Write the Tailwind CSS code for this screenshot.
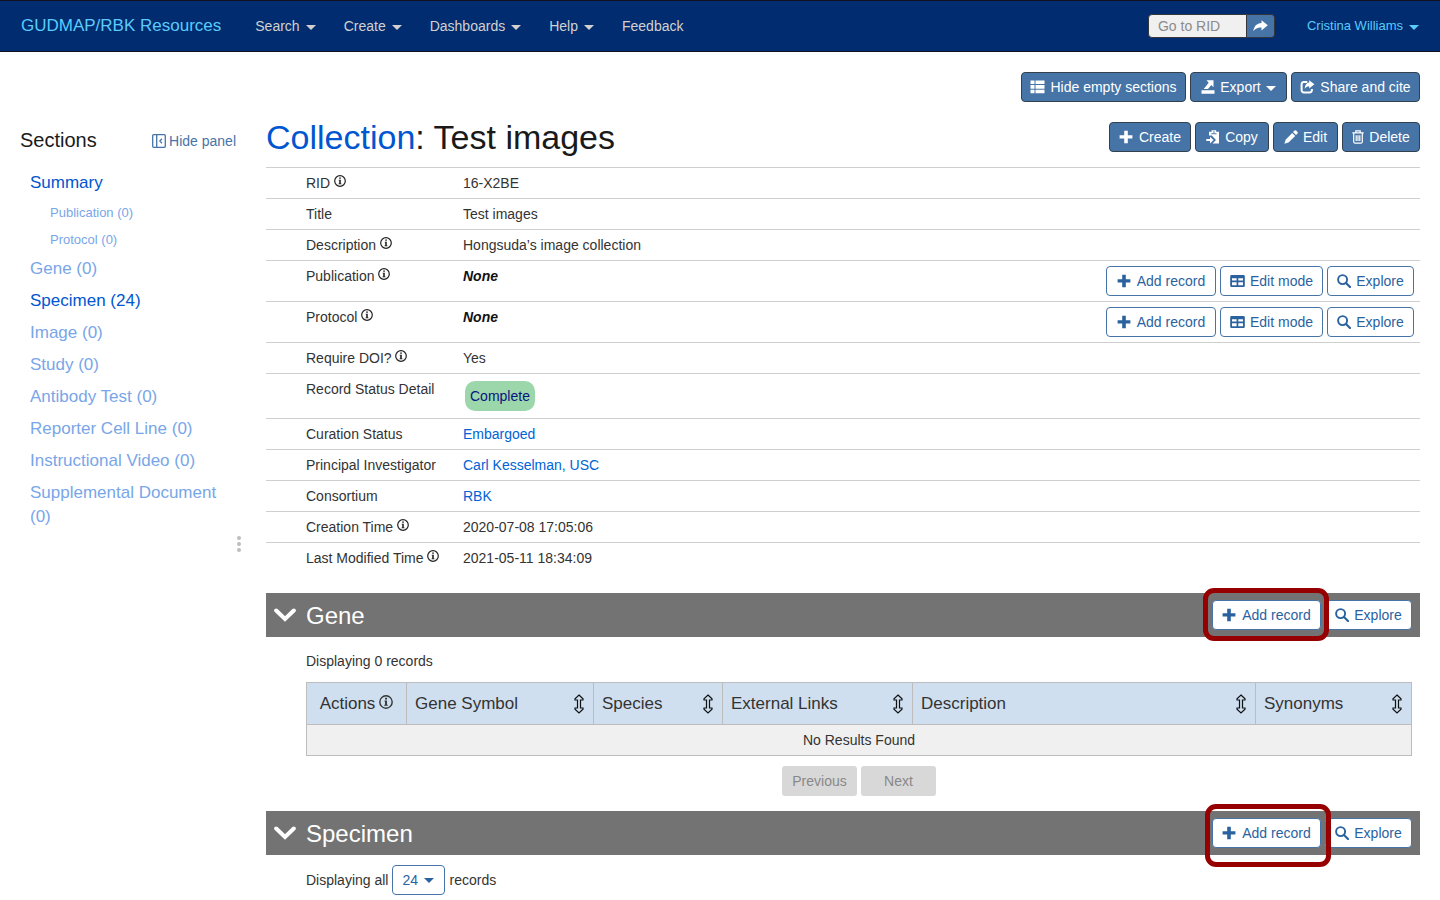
<!DOCTYPE html>
<html lang="en">
<head>
<meta charset="utf-8">
<meta name="viewport" content="width=device-width, initial-scale=1">
<title>Collection: Test images</title>
<script src="https://cdn.jsdelivr.net/npm/@tailwindcss/browser@4"></script>
</head>
<body class="min-h-screen bg-white font-['Liberation_Sans',Arial,sans-serif] text-sm leading-5 text-[#333]">
<svg class="hidden" aria-hidden="true">
  <symbol id="caret" viewBox="0 0 10 5"><path d="M0 0h10L5 5z" fill="currentColor"/></symbol>
  <symbol id="info" viewBox="0 0 12 12"><circle cx="6" cy="6" r="5.3" fill="none" stroke="currentColor" stroke-width="1.2"/><path d="M5.2 2.4h1.7v1.4H5.2zM4.7 4.8h2.1v3.6h.7v.8h-3v-.8h.7V5.6h-.5z" fill="currentColor"/></symbol>
  <symbol id="plus" viewBox="0 0 14 14"><path d="M5.2.8h3.6v4.4h4.6v3.4H8.800v4.600H5.200V8.600H.6V5.200h4.600z" fill="currentColor"/></symbol>
  <symbol id="grid" viewBox="0 0 15 14"><path fill-rule="evenodd" d="M1.500 1h12a1.300 1.300 0 0 1 1.300 1.300v9.400a1.300 1.300 0 0 1-1.300 1.300h-12a1.300 1.300 0 0 1-1.300-1.300V2.300A1.300 1.300 0 0 1 1.500 1zM2 4.300v2.300h4.600V4.300zm6.300 0v2.300H13V4.300zM2 8.300v2.900h4.600V8.300zm6.300 0v2.900H13V8.300z" fill="currentColor"/></symbol>
  <symbol id="search" viewBox="0 0 14 14"><circle cx="5.600" cy="5.600" r="4.500" fill="none" stroke="currentColor" stroke-width="1.900"/><path d="M9 9l4 4" stroke="currentColor" stroke-width="2.200" stroke-linecap="round"/></symbol>
  <symbol id="list" viewBox="0 0 15 14"><path d="M.5.500h4v3.600h-4zM5.500.500h9v3.600h-9zM.5 5.100h4v3.600h-4zM5.500 5.100h9v3.600h-9zM.5 9.700h4v3.600h-4zM5.500 9.700h9v3.600h-9z" fill="currentColor"/></symbol>
  <symbol id="export" viewBox="0 0 14 14"><path d="M.5 10.300h13v3.500H.5zM5.500.2h7v7L10.300 5 7 9H2.700l5-6.300z" fill="currentColor"/></symbol>
  <symbol id="share" viewBox="0 0 15 14"><path d="M7.300 1.900H4A2.200 2.200 0 0 0 1.600 4.100v6A2.200 2.200 0 0 0 4 12.400h5.700a2.200 2.200 0 0 0 2.200-2.300V9" fill="none" stroke="currentColor" stroke-width="2"/><path d="M9.200.3l5.200 4-5.200 4.200V6.200C7 6.200 5.700 7 4.700 8.900 4.800 5.200 6.500 2.900 9.200 2.600z" fill="currentColor"/></symbol>
  <symbol id="copy" viewBox="0 0 14 14"><path d="M3 1.800h2.600V.3h4.600v1.500H13v11.700H6.500L10 10 5.800 5.500H3zM5.300 3.200v1h5.200v-1zM7 1.400v1h1.800v-1z" fill="currentColor" fill-rule="evenodd"/><path d="M4 6.700L7.500 10 4 13.400V11H.3V9H4z" fill="currentColor"/></symbol>
  <symbol id="pencil" viewBox="0 0 14 14"><path d="M10.300.8a1.500 1.500 0 0 1 2.100 0l.9.900a1.500 1.500 0 0 1 0 2.100l-1.300 1.300-3-3zM8.200 2.900l3 3-6.700 6.700-4.100 1.200L1.600 9.700z" fill="currentColor"/></symbol>
  <symbol id="trash" viewBox="0 0 12 14"><path d="M.3 2.800h11.400M3.800 2.800V.8h4.400v2M1.700 3v8.700c0 .9.600 1.500 1.500 1.500h5.600c.9 0 1.500-.6 1.500-1.500V3M4.200 5.200v5.800M6 5.200v5.800M7.800 5.200v5.800" fill="none" stroke="currentColor" stroke-width="1.200"/></symbol>
  <symbol id="go" viewBox="0 0 15 12"><path d="M8.500.2L14.800 5.300 8.500 10.400V7.500C4.800 7.300 2.500 8.300.3 11.300 1 6.200 3.700 3.300 8.500 3z" fill="currentColor"/></symbol>
  <symbol id="chevron" viewBox="0 0 22 14"><path d="M2.200 2.500L11 11l8.800-8.500" fill="none" stroke="currentColor" stroke-width="4" stroke-linecap="round"/></symbol>
  <symbol id="sort" viewBox="0 0 10 20"><path d="M5 1L9 4.800V6H6.500v8H9v1.200L5 19 1 15.200V14h2.500V6H1V4.800z" fill="none" stroke="currentColor" stroke-width="1.200"/></symbol>
  <symbol id="panel" viewBox="0 0 14 14"><path d="M1.700.7h10.600a1 1 0 0 1 1 1v10.600a1 1 0 0 1-1 1H1.700a1 1 0 0 1-1-1V1.700a1 1 0 0 1 1-1zM4.700.7v12.600M9.900 4.800L7.900 7l2 2.200" fill="none" stroke="currentColor" stroke-width="1.300"/></symbol>
</svg>

<header class="flex h-[52px] items-center border-y border-[#10131f] bg-[#012c70] pr-[21px] pl-[21px] text-[#d3d1cf]">
  <a href="#" class="text-[17px] whitespace-nowrap text-[#5bcbfb]">GUDMAP/RBK Resources</a>
  <nav class="ml-[34px] flex items-center gap-[28px]">
    <button class="flex items-center gap-1.5">Search<svg class="mt-0.5 h-[5px] w-2.5"><use href="#caret"/></svg></button>
    <button class="flex items-center gap-1.5">Create<svg class="mt-0.5 h-[5px] w-2.5"><use href="#caret"/></svg></button>
    <button class="flex items-center gap-1.5">Dashboards<svg class="mt-0.5 h-[5px] w-2.5"><use href="#caret"/></svg></button>
    <button class="flex items-center gap-1.5">Help<svg class="mt-0.5 h-[5px] w-2.5"><use href="#caret"/></svg></button>
    <a href="#">Feedback</a>
  </nav>
  <form class="ml-auto flex h-6">
    <input type="text" aria-label="Go to RID" placeholder="Go to RID" class="w-[99px] rounded-l border border-[#33373d] bg-[#f0f0f0] px-[9px] text-sm text-[#333] placeholder:text-[#8b8b8b]">
    <button type="button" aria-label="Go" class="flex w-7 items-center justify-center rounded-r border border-l-0 border-[#33373d] bg-[#4674a7] text-white"><svg class="h-3 w-[15px]"><use href="#go"/></svg></button>
  </form>
  <button class="ml-8 flex items-center gap-1.5 text-[13px] text-[#5bcbfb]">Cristina Williams<svg class="mt-0.5 h-[5px] w-2.5"><use href="#caret"/></svg></button>
</header>

<div class="flex">
  <aside class="w-[246px] shrink-0 pt-[74px]">
    <div class="flex items-center justify-between pr-2.5 pl-5">
      <h2 class="text-xl leading-7 text-[#1a1a1a]">Sections</h2>
      <button class="mt-0.5 flex items-center gap-[3px] text-[#4674a7]"><svg class="size-3.5"><use href="#panel"/></svg>Hide panel</button>
    </div>
    <ul class="mt-[13px] pr-5 pl-[30px] text-[17px] leading-6 text-[#79a6e8]">
      <li class="py-1"><a href="#summary" class="text-[#0056d0]">Summary</a></li>
      <li class="pl-5 text-[13px] leading-[27px]"><a href="#publication">Publication (0)</a></li>
      <li class="pl-5 text-[13px] leading-[27px]"><a href="#protocol">Protocol (0)</a></li>
      <li class="py-1"><a href="#gene">Gene (0)</a></li>
      <li class="py-1"><a href="#specimen" class="text-[#0056d0]">Specimen (24)</a></li>
      <li class="py-1"><a href="#">Image (0)</a></li>
      <li class="py-1"><a href="#">Study (0)</a></li>
      <li class="py-1"><a href="#">Antibody Test (0)</a></li>
      <li class="py-1"><a href="#">Reporter Cell Line (0)</a></li>
      <li class="py-1"><a href="#">Instructional Video (0)</a></li>
      <li class="py-1"><a href="#">Supplemental Document (0)</a></li>
    </ul>
    <div class="mt-[3px] flex flex-col items-end gap-0.5 pr-[5px]">
      <span class="size-1 rounded-full bg-[#bdbdbd]"></span>
      <span class="size-1 rounded-full bg-[#bdbdbd]"></span>
      <span class="size-1 rounded-full bg-[#bdbdbd]"></span>
    </div>
  </aside>

  <main class="min-w-0 flex-1 px-5 pt-5">
    <div class="flex justify-end gap-1 text-white">
      <button class="flex h-[30px] min-w-[165px] items-center justify-center gap-[5px] rounded border border-[#33414f] bg-[#4674a7]"><svg class="h-3.5 w-[15px]"><use href="#list"/></svg>Hide empty sections</button>
      <button class="flex h-[30px] min-w-[97px] items-center justify-center gap-[5px] rounded border border-[#33414f] bg-[#4674a7]"><svg class="size-3.5"><use href="#export"/></svg>Export<svg class="mt-0.5 h-[5px] w-2.5"><use href="#caret"/></svg></button>
      <button class="flex h-[30px] min-w-[129px] items-center justify-center gap-[5px] rounded border border-[#33414f] bg-[#4674a7]"><svg class="h-3.5 w-[15px]"><use href="#share"/></svg>Share and cite</button>
    </div>
    <div class="mt-5 mb-[15px] flex items-center justify-between text-white">
      <h1 class="text-[34px] leading-[30px] text-[#1a1a1a]"><a href="#" class="text-[#0056d0]">Collection</a>: Test images</h1>
      <div class="flex gap-1">
        <button class="flex h-[30px] min-w-[82px] items-center justify-center gap-1.5 rounded border border-[#33414f] bg-[#4674a7]"><svg class="size-3.5"><use href="#plus"/></svg>Create</button>
        <button class="flex h-[30px] min-w-[74px] items-center justify-center gap-[5px] rounded border border-[#33414f] bg-[#4674a7]"><svg class="size-3.5"><use href="#copy"/></svg>Copy</button>
        <button class="flex h-[30px] min-w-[65px] items-center justify-center gap-[5px] rounded border border-[#33414f] bg-[#4674a7]"><svg class="size-3.5"><use href="#pencil"/></svg>Edit</button>
        <button class="flex h-[30px] min-w-[78px] items-center justify-center gap-[5px] rounded border border-[#33414f] bg-[#4674a7]"><svg class="h-3.5 w-3"><use href="#trash"/></svg>Delete</button>
      </div>
    </div>

    <table id="summary" class="w-full border-separate border-spacing-0 [&_td]:border-t [&_td]:border-[#cfcfcf] [&_td]:py-[5px] [&_td]:align-top [&_th]:w-[197px] [&_th]:border-t [&_th]:border-[#cfcfcf] [&_th]:py-[5px] [&_th]:pl-10 [&_th]:text-left [&_th]:align-top [&_th]:font-normal [&_th]:whitespace-nowrap">
      <tbody>
        <tr><th scope="row">RID <svg class="inline-block size-3 align-[1px] text-[#222]"><use href="#info"/></svg></th><td>16-X2BE</td></tr>
        <tr><th scope="row">Title</th><td>Test images</td></tr>
        <tr><th scope="row">Description <svg class="inline-block size-3 align-[1px] text-[#222]"><use href="#info"/></svg></th><td>Hongsuda’s image collection</td></tr>
        <tr id="publication"><th scope="row">Publication <svg class="inline-block size-3 align-[1px] text-[#222]"><use href="#info"/></svg></th><td>
          <div class="flex justify-between pr-1.5"><strong class="text-[#111] italic">None</strong>
            <div class="flex gap-1 text-[#2a629f]">
              <button class="flex h-[30px] min-w-[110px] items-center justify-center gap-1.5 rounded border border-[#4674a7] bg-white"><svg class="size-3.5"><use href="#plus"/></svg>Add record</button>
              <button class="flex h-[30px] min-w-[103px] items-center justify-center gap-[5px] rounded border border-[#4674a7] bg-white"><svg class="h-3.5 w-[15px]"><use href="#grid"/></svg>Edit mode</button>
              <button class="flex h-[30px] min-w-[87px] items-center justify-center gap-[5px] rounded border border-[#4674a7] bg-white"><svg class="size-3.5"><use href="#search"/></svg>Explore</button>
            </div></div></td></tr>
        <tr id="protocol"><th scope="row">Protocol <svg class="inline-block size-3 align-[1px] text-[#222]"><use href="#info"/></svg></th><td>
          <div class="flex justify-between pr-1.5"><strong class="text-[#111] italic">None</strong>
            <div class="flex gap-1 text-[#2a629f]">
              <button class="flex h-[30px] min-w-[110px] items-center justify-center gap-1.5 rounded border border-[#4674a7] bg-white"><svg class="size-3.5"><use href="#plus"/></svg>Add record</button>
              <button class="flex h-[30px] min-w-[103px] items-center justify-center gap-[5px] rounded border border-[#4674a7] bg-white"><svg class="h-3.5 w-[15px]"><use href="#grid"/></svg>Edit mode</button>
              <button class="flex h-[30px] min-w-[87px] items-center justify-center gap-[5px] rounded border border-[#4674a7] bg-white"><svg class="size-3.5"><use href="#search"/></svg>Explore</button>
            </div></div></td></tr>
        <tr><th scope="row">Require DOI? <svg class="inline-block size-3 align-[1px] text-[#222]"><use href="#info"/></svg></th><td>Yes</td></tr>
        <tr><th scope="row">Record Status Detail</th><td><div class="mx-0.5 my-0.5 w-fit rounded-[10px] bg-[#9cd6ab] p-[5px] text-[#0a1380]">Complete</div></td></tr>
        <tr><th scope="row">Curation Status</th><td><a href="#" class="text-[#0063d6]">Embargoed</a></td></tr>
        <tr><th scope="row">Principal Investigator</th><td><a href="#" class="text-[#0063d6]">Carl Kesselman, USC</a></td></tr>
        <tr><th scope="row">Consortium</th><td><a href="#" class="text-[#0063d6]">RBK</a></td></tr>
        <tr><th scope="row">Creation Time <svg class="inline-block size-3 align-[1px] text-[#222]"><use href="#info"/></svg></th><td>2020-07-08 17:05:06</td></tr>
        <tr><th scope="row">Last Modified Time <svg class="inline-block size-3 align-[1px] text-[#222]"><use href="#info"/></svg></th><td>2021-05-11 18:34:09</td></tr>
      </tbody>
    </table>

    <section id="gene" class="mt-5">
      <div class="flex h-11 items-center bg-[#737373] pr-2 pl-2">
        <button aria-label="Collapse Gene" class="text-white"><svg class="h-3.5 w-[22px]"><use href="#chevron"/></svg></button>
        <h2 class="mt-0.5 ml-2.5 text-2xl text-white">Gene</h2>
        <div class="ml-auto flex gap-1 text-[#2a629f]">
          <div class="relative">
            <button class="flex h-[30px] min-w-[109px] items-center justify-center gap-1.5 rounded border border-[#4674a7] bg-white"><svg class="size-3.5"><use href="#plus"/></svg>Add record</button>
            <span class="pointer-events-none absolute -top-3 -left-[9px] z-10 h-[53px] w-[126px] rounded-[11px] border-5 border-[#970000]"></span>
          </div>
          <button class="flex h-[30px] min-w-[87px] items-center justify-center gap-[5px] rounded border border-[#4674a7] bg-white"><svg class="size-3.5"><use href="#search"/></svg>Explore</button>
        </div>
      </div>
      <div class="mr-2 ml-10 pt-3.5">
        <p>Displaying 0 records</p>
        <table class="mt-[11px] w-full table-fixed border-collapse [&_td]:border [&_td]:border-[#bdbdbd] [&_th]:h-[42px] [&_th]:border [&_th]:border-[#bdbdbd] [&_th]:px-2 [&_th]:text-left [&_th]:font-normal">
          <colgroup><col class="w-[100px]"><col class="w-[187px]"><col class="w-[129px]"><col class="w-[190px]"><col><col class="w-[156px]"></colgroup>
          <thead class="bg-[#cfdff0] text-[17px]">
            <tr>
              <th scope="col"><div class="flex items-center justify-center gap-1">Actions<svg class="mb-1 size-3.5"><use href="#info"/></svg></div></th>
              <th scope="col"><div class="flex items-center justify-between">Gene Symbol<button aria-label="Sort" class="mr-px text-[#111]"><svg class="h-5 w-2.5"><use href="#sort"/></svg></button></div></th>
              <th scope="col"><div class="flex items-center justify-between">Species<button aria-label="Sort" class="mr-px text-[#111]"><svg class="h-5 w-2.5"><use href="#sort"/></svg></button></div></th>
              <th scope="col"><div class="flex items-center justify-between">External Links<button aria-label="Sort" class="mr-px text-[#111]"><svg class="h-5 w-2.5"><use href="#sort"/></svg></button></div></th>
              <th scope="col"><div class="flex items-center justify-between">Description<button aria-label="Sort" class="mr-px text-[#111]"><svg class="h-5 w-2.5"><use href="#sort"/></svg></button></div></th>
              <th scope="col"><div class="flex items-center justify-between">Synonyms<button aria-label="Sort" class="mr-px text-[#111]"><svg class="h-5 w-2.5"><use href="#sort"/></svg></button></div></th>
            </tr>
          </thead>
          <tbody><tr class="bg-[#f0f0f0]"><td colspan="6" class="h-[31px] text-center">No Results Found</td></tr></tbody>
        </table>
        <div class="mt-2.5 flex justify-center gap-1 text-[#888]">
          <button disabled class="h-[30px] w-[75px] rounded-[3px] bg-[#d8d8d8]">Previous</button>
          <button disabled class="h-[30px] w-[75px] rounded-[3px] bg-[#d8d8d8]">Next</button>
        </div>
      </div>
    </section>

    <section id="specimen" class="mt-[15px]">
      <div class="flex h-11 items-center bg-[#737373] pr-2 pl-2">
        <button aria-label="Collapse Specimen" class="text-white"><svg class="h-3.5 w-[22px]"><use href="#chevron"/></svg></button>
        <h2 class="mt-0.5 ml-2.5 text-2xl text-white">Specimen</h2>
        <div class="ml-auto flex gap-1 text-[#2a629f]">
          <div class="relative">
            <button class="flex h-[30px] min-w-[109px] items-center justify-center gap-1.5 rounded border border-[#4674a7] bg-white"><svg class="size-3.5"><use href="#plus"/></svg>Add record</button>
            <span class="pointer-events-none absolute -top-3.5 -left-[7px] z-10 h-[63px] w-[126px] rounded-[11px] border-5 border-[#970000]"></span>
          </div>
          <button class="flex h-[30px] min-w-[87px] items-center justify-center gap-[5px] rounded border border-[#4674a7] bg-white"><svg class="size-3.5"><use href="#search"/></svg>Explore</button>
        </div>
      </div>
      <div class="ml-10 flex items-center gap-1 pt-2.5">
        <label for="page-size">Displaying all</label>
        <div class="relative text-[#2a629f]">
          <select id="page-size" class="h-[30px] w-[53px] appearance-none rounded border border-[#4674a7] bg-white pl-[9px] text-sm"><option>24</option></select>
          <svg class="pointer-events-none absolute top-[13px] right-[11px] h-[5px] w-2.5"><use href="#caret"/></svg>
        </div>
        <span>records</span>
      </div>
    </section>
  </main>
</div>
</body>
</html>
